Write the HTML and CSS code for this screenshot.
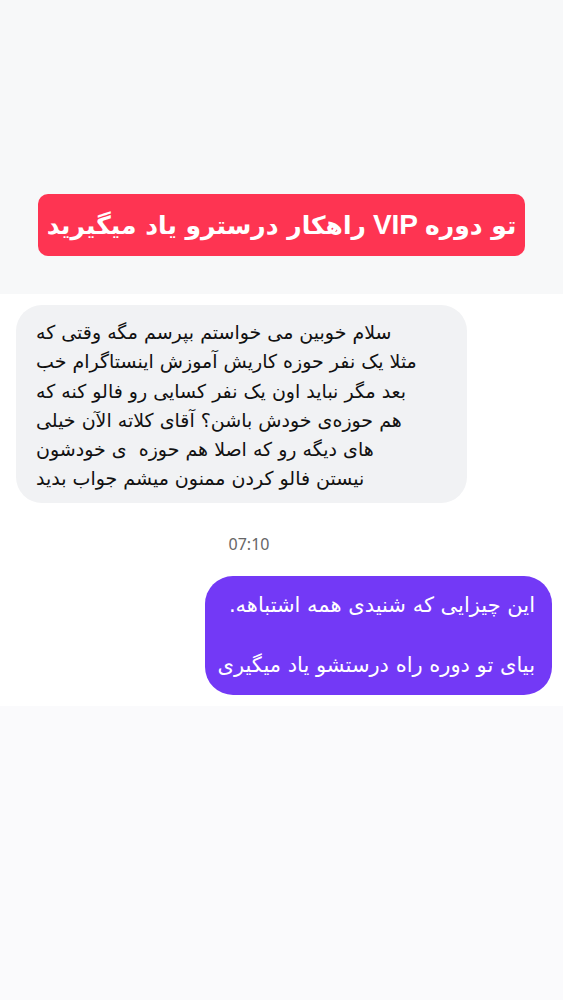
FILE: index.html
```html
<!DOCTYPE html>
<html lang="fa">
<head>
    <meta charset="UTF-8">
    <meta name="viewport" content="width=device-width, initial-scale=1.0">
    <title>VIP</title>
    <link rel="stylesheet" href="styles.css">
</head>
<body>
    <div class="top">
        <div class="banner" dir="rtl">تو دوره <b class="latin">VIP</b> راهکار درسترو یاد میگیرید</div>
    </div>

    <div class="chat">
        <div class="bubble them" dir="rtl">
            سلام خوبین می خواستم بپرسم مگه وقتی که<br>
            مثلا یک نفر حوزه کاریش آموزش اینستاگرام خب<br>
            بعد مگر نباید اون یک نفر کسایی رو فالو کنه که<br>
            هم حوزه‌ی خودش باشن؟ آقای کلاته الآن خیلی<br>
            های دیگه رو که اصلا هم حوزه &nbsp;ی خودشون<br>
            نیستن فالو کردن ممنون میشم جواب بدید
        </div>

        <div class="time">07:10</div>

        <div class="bubble me" dir="rtl">
            این چیزایی که شنیدی همه اشتباهه.<br><br>
            بیای تو دوره راه درستشو یاد میگیری
        </div>
    </div>

    <div class="bottom"></div>
</body>
</html>
```

FILE: styles.css
```css
body {
    margin: 0;
    font-family: "DejaVu Sans", "Noto Sans", sans-serif;
}
.top {
    height: 294px;
    background: #f7f8f9;
    padding-top: 194px;
    box-sizing: border-box;
}
.banner {
    margin: 0 38px;
    height: 62px;
    border-radius: 10px;
    background: #fe3452;
    color: #fff;
    font-weight: bold;
    font-size: 25px;
    display: flex;
    align-items: center;
    justify-content: center;
    gap: 7px;
}
.banner .latin {
    font-family: "Liberation Sans", sans-serif;
    font-size: 28px;
}
.chat {
    background: #fff;
    height: 412px;
    padding-top: 11px;
    box-sizing: border-box;
}
.bubble {
    box-sizing: border-box;
    font-size: 19px;
    line-height: 29.3px;
}
.them {
    margin-left: 16px;
    width: 451px;
    height: 198px;
    border-radius: 26px;
    background: #f1f2f4;
    color: #111;
    text-align: left;
    padding: 13px 22px 0 20px;
}
.time {
    width: 498px;
    text-align: center;
    color: #666;
    font-family: "Noto Sans", sans-serif;
    font-size: 16px;
    margin-top: 30px;
    height: 43px;
}
.me {
    margin-left: auto;
    margin-right: 11px;
    width: 347px;
    height: 119px;
    border-radius: 28px;
    background: #7339f6;
    color: #fff;
    font-size: 21px;
    line-height: 30px;
    text-align: right;
    padding: 14px 17px 0 12px;
}
.bottom {
    height: 294px;
    background: #fafafc;
}
```
